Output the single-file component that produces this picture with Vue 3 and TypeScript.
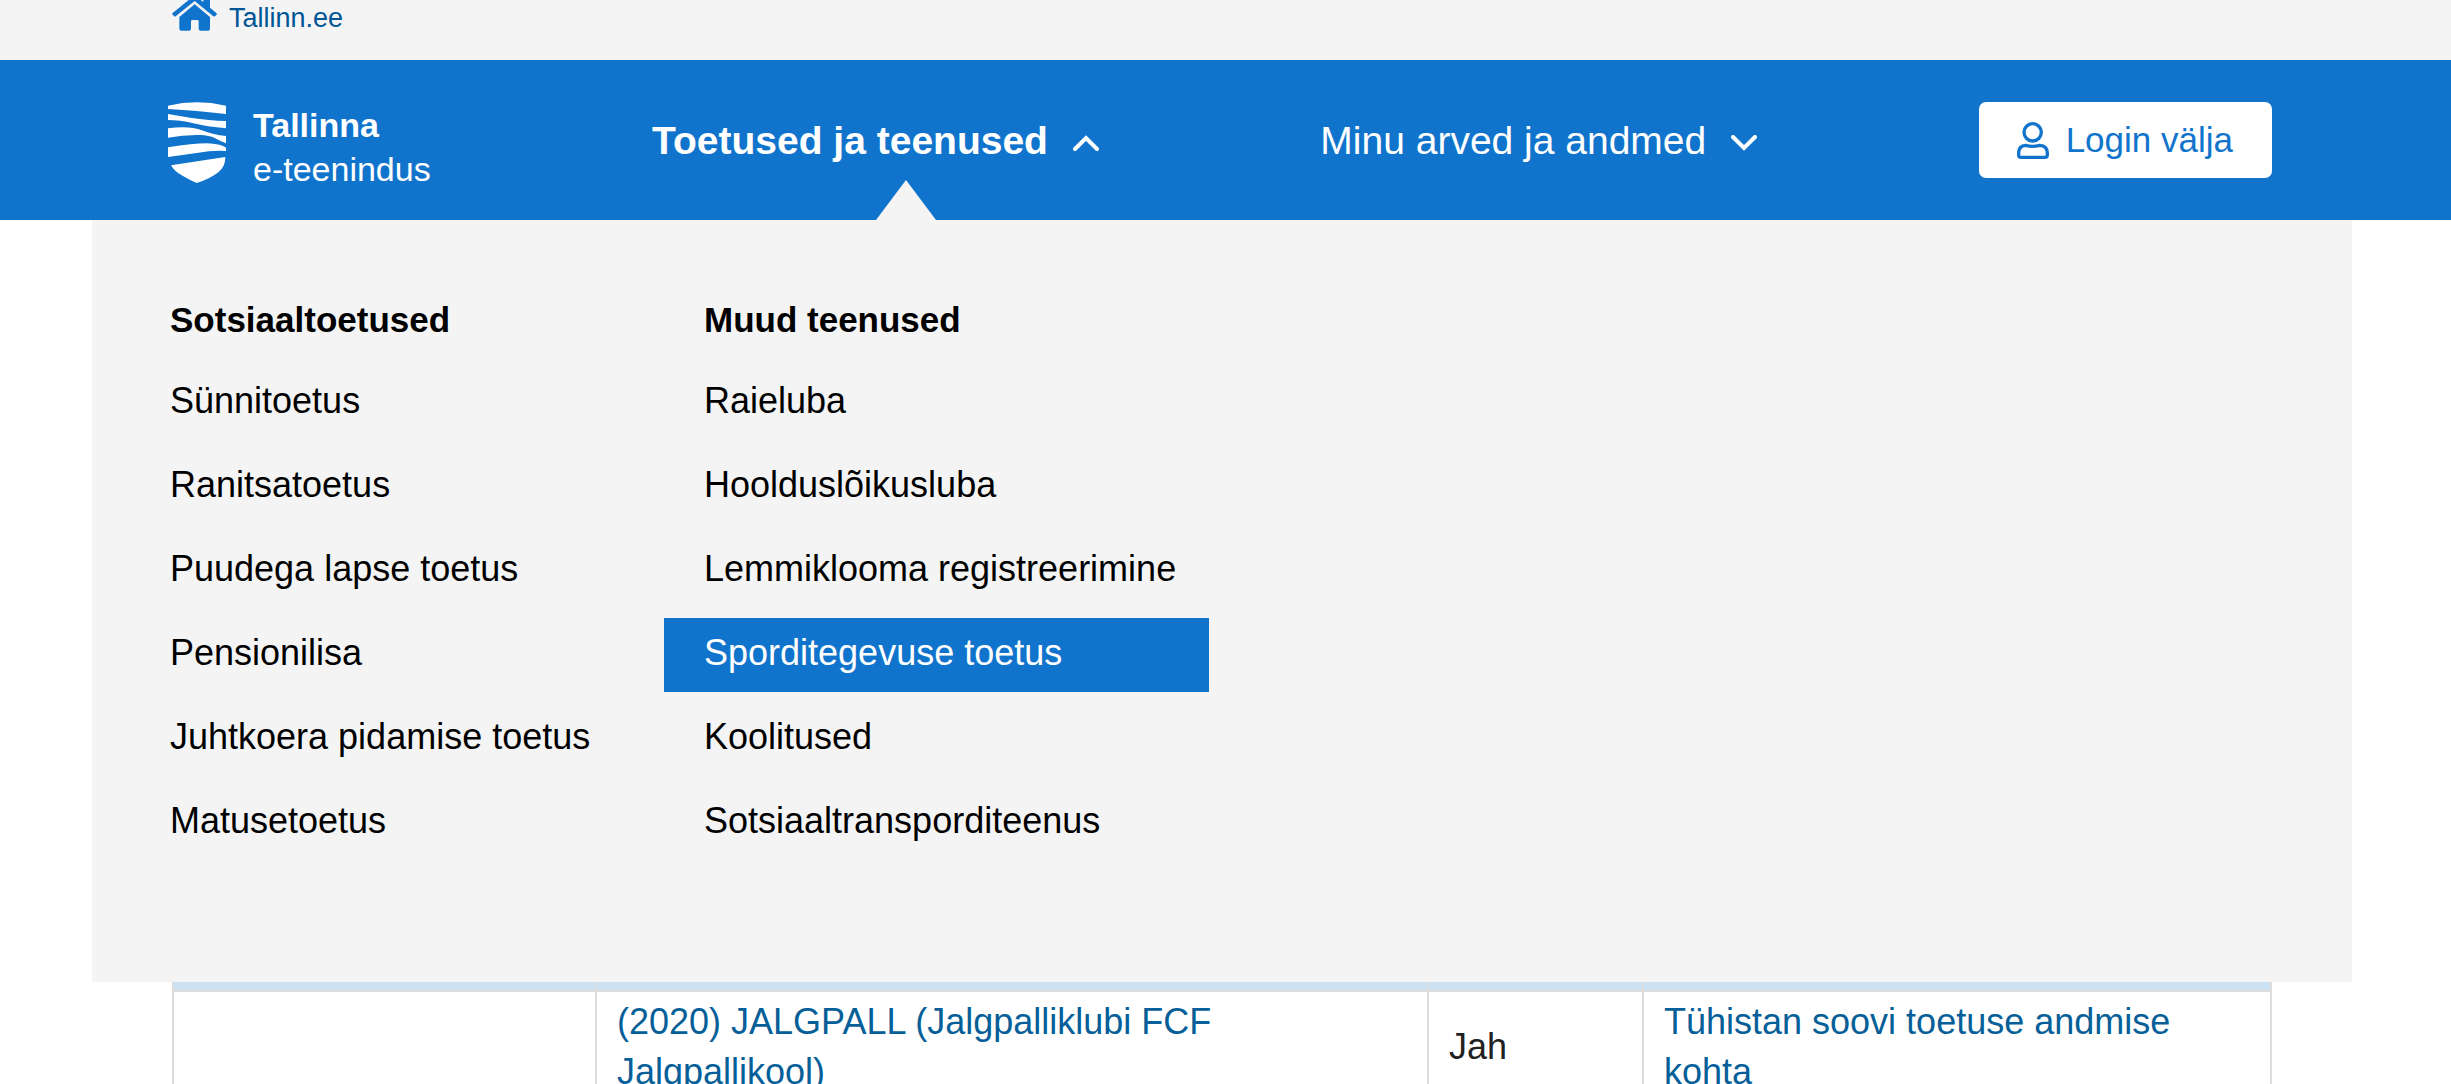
<script setup lang="ts">
import { ref } from 'vue'

interface ServiceLink {
  label: string
  active?: boolean
}

interface ServiceGroup {
  title: string
  links: ServiceLink[]
}

const menuOpen = ref<boolean>(true)

const groups: ServiceGroup[] = [
  {
    title: 'Sotsiaaltoetused',
    links: [
      { label: 'Sünnitoetus' },
      { label: 'Ranitsatoetus' },
      { label: 'Puudega lapse toetus' },
      { label: 'Pensionilisa' },
      { label: 'Juhtkoera pidamise toetus' },
      { label: 'Matusetoetus' },
    ],
  },
  {
    title: 'Muud teenused',
    links: [
      { label: 'Raieluba' },
      { label: 'Hoolduslõikusluba' },
      { label: 'Lemmiklooma registreerimine' },
      { label: 'Sporditegevuse toetus', active: true },
      { label: 'Koolitused' },
      { label: 'Sotsiaaltransporditeenus' },
    ],
  },
]
</script>

<template>
  <div class="page">
    <div class="topbar">
      <a class="home" href="#">
        <svg class="home-icon" viewBox="276 0 135 93" aria-hidden="true">
          <path d="M278 39 L326 0 H362 L370 6 V0 H390 V23 L409 39 Q412 42 409 45 L405 49 Q402 51 399 48 L344 3 L288 48 Q285 51 282 48 L278 44 Q275 41 278 39Z" />
          <path d="M344 13 L390 51 V86 Q390 92 384 92 H362 Q356 92 356 86 V64 Q356 60 352 60 H337 Q333 60 333 64 V86 Q333 92 327 92 H304 Q298 92 298 86 V51Z" />
        </svg>
        Tallinn.ee
      </a>
    </div>

    <header class="header">
      <div class="header-inner">
        <a class="brand" href="#">
          <svg class="shield" viewBox="264 306 174 243" aria-hidden="true">
            <path d="M264 317 Q350 297 438 317 V342 Q350 331 264 327Z" />
            <path d="M264 342 L330 353 Q390 362 438 363 V385 Q380 380 340 370 Q300 360 264 360Z" />
            <path d="M264 385 Q328 376 366 391 Q400 405 438 408 V430 Q424 425 404 414 Q388 406 360 405 Q310 404 264 413Z" />
            <path d="M264 442 Q340 430 380 430 Q420 431 438 443 V453 Q400 450 350 459 L264 471Z" />
            <path d="M273 496 L436 471 Q436 500 415 517 Q390 537 350 549 Q330 541 305 526 Q283 514 273 496Z" />
          </svg>
          <span class="brand-text"><strong>Tallinna</strong><span>e-teenindus</span></span>
        </a>

        <button class="nav-item open" type="button" :aria-expanded="menuOpen" @click="menuOpen = !menuOpen">
          Toetused ja teenused
          <svg class="chevron" viewBox="0 0 26 16" aria-hidden="true"><path d="M2 14 L13 3 L24 14" /></svg>
        </button>

        <button class="nav-item" type="button" aria-expanded="false">
          Minu arved ja andmed
          <svg class="chevron" viewBox="0 0 26 16" aria-hidden="true"><path d="M2 2 L13 13 L24 2" /></svg>
        </button>

        <button class="logout" type="button">
          <svg class="user-icon" viewBox="231 124 96 111" aria-hidden="true">
            <circle cx="278" cy="155" r="26" />
            <path d="M257 194 Q278 200 299 194 Q322 195 322 217 V223 Q322 230 315 230 H243 Q236 230 236 223 V217 Q236 195 257 194Z" />
          </svg>
          Login välja
        </button>
      </div>
    </header>

    <main class="shell">
      <nav v-if="menuOpen" class="menu" aria-label="Toetused ja teenused">
        <section v-for="group in groups" :key="group.title">
          <h2>{{ group.title }}</h2>
          <ul>
            <li v-for="link in group.links" :key="link.label">
              <a href="#" :class="{ active: link.active }">{{ link.label }}</a>
            </li>
          </ul>
        </section>
      </nav>

      <div class="table-wrap">
        <table>
          <colgroup>
            <col class="col-date" />
            <col />
            <col class="col-answer" />
            <col class="col-action" />
          </colgroup>
          <thead>
            <tr><th></th><th></th><th></th><th></th></tr>
          </thead>
          <tbody>
            <tr>
              <td></td>
              <td><a href="#">(2020) JALGPALL (Jalgpalliklubi FCF Jalgpallikool)</a></td>
              <td>Jah</td>
              <td><a href="#">Tühistan soovi toetuse andmise kohta</a></td>
            </tr>
          </tbody>
        </table>
      </div>
    </main>
  </div>
</template>

<style>
body {
  margin: 0;
  background: #fff;
}
</style>

<style scoped>
.page {
  height: 100vh;
  overflow: hidden;
  font-family: "Liberation Sans", Arial, sans-serif;
  font-size: 36px;
  color: #000;
}

a {
  color: inherit;
  text-decoration: none;
}

button {
  border: 0;
  margin: 0;
  font-family: inherit;
  cursor: pointer;
}

.topbar {
  height: 60px;
  padding: 0 172px;
  background: #f4f4f4;
}

.home {
  display: flex;
  align-items: flex-start;
  gap: 12px;
  font-size: 27px;
  line-height: 36px;
  color: #005596;
}

.home-icon {
  width: 45px;
  height: 31px;
  fill: #1174cc;
}

.header {
  background: #1174cc;
  color: #fff;
}

.header-inner {
  display: flex;
  justify-content: space-between;
  height: 160px;
  margin: 0 99px 0 92px;
  padding: 0 80px 0 76px;
}

.brand {
  display: flex;
  align-items: flex-start;
  gap: 27px;
  padding-top: 42px;
}

.shield {
  width: 58px;
  height: 81px;
  fill: #fff;
}

.brand-text {
  display: flex;
  flex-direction: column;
  padding-top: 1px;
  font-size: 34px;
  line-height: 44px;
}

.nav-item {
  position: relative;
  display: flex;
  align-items: center;
  gap: 25px;
  padding: 2px 0 0;
  background: none;
  color: #fff;
  font-size: 39px;
  white-space: nowrap;
}

.nav-item.open {
  font-weight: 700;
}

.nav-item.open::after {
  content: "";
  position: absolute;
  bottom: 0;
  left: 224px;
  border: 30px solid transparent;
  border-top: 0;
  border-bottom: 40px solid #f4f4f4;
}

.chevron {
  width: 26px;
  height: 16px;
  margin-top: 4px;
  fill: none;
  stroke: #fff;
  stroke-width: 4;
  stroke-linecap: round;
}

.logout {
  display: flex;
  align-items: center;
  align-self: center;
  gap: 17px;
  height: 76px;
  padding: 0 39px 0 38px;
  border-radius: 7px;
  background: #fff;
  color: #1174cc;
  font-size: 35px;
  white-space: nowrap;
}

.user-icon {
  width: 32px;
  height: 37px;
  fill: none;
  stroke: #1174cc;
  stroke-width: 10;
}

.shell {
  margin: 0 99px 0 92px;
}

.menu {
  display: grid;
  grid-template-columns: 494px 545px;
  gap: 40px;
  padding: 78px 38px 122px;
  background: #f4f4f4;
}

.menu h2 {
  margin: 0 0 24px;
  padding-left: 40px;
  font-size: 35px;
  line-height: 44px;
}

.menu ul {
  display: flex;
  flex-direction: column;
  gap: 10px;
  margin: 0;
  padding: 0;
  list-style: none;
}

.menu li a {
  display: block;
  padding: 0 0 4px 40px;
  line-height: 70px;
  white-space: nowrap;
}

.menu a.active {
  background: #1174cc;
  color: #fff;
}

.table-wrap {
  padding: 0 80px;
}

table {
  width: 100%;
  table-layout: fixed;
  border-collapse: separate;
  border-spacing: 0;
}

.col-date {
  width: 425px;
}

.col-answer {
  width: 215px;
}

.col-action {
  width: 628px;
}

th,
td {
  border-right: 2px solid #ddd;
}

th:first-child,
td:first-child {
  border-left: 2px solid #ddd;
}

th {
  height: 8px;
  padding: 0;
  border-bottom: 2px solid #ddd;
  background: #cce1f2;
}

td {
  padding: 5px 20px;
  line-height: 50px;
  color: #212121;
}

td a {
  color: #065f98;
}
</style>
